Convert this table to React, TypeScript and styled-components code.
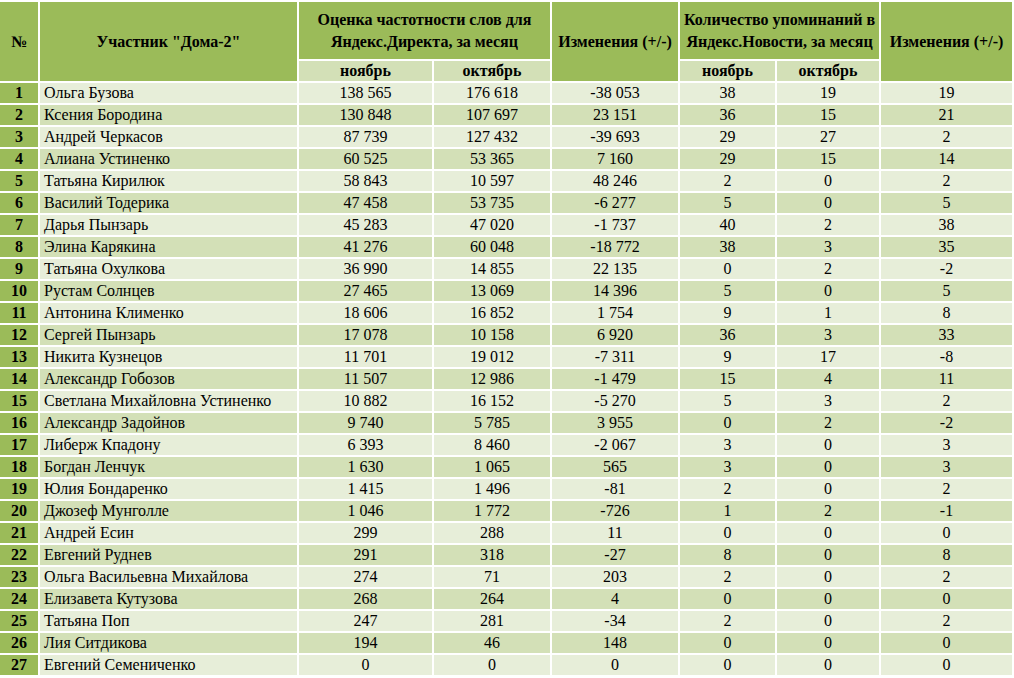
import React from "react";
import styled, { createGlobalStyle } from "styled-components";

const Global = createGlobalStyle`
  html, body { margin: 0; padding: 0; background: #ffffff; }
  body { font-family: "Liberation Serif", "DejaVu Serif", serif; color: #000; }
`;

const HEAD = "#9bbb59";
const SUB = "#d3e0b7";
const ODD = "#e7eed9";
const EVEN = "#d3e0b7";

const Grid = styled.div`
  display: grid;
  grid-template-columns: 38px 257px 133px 116px 126px 95px 102px 131px;
  grid-template-rows: 57px 20px;
  grid-auto-rows: 20px;
  gap: 2px;
  padding: 2px 2px 0 0;
  width: 1014px;
  height: 678px;
  box-sizing: border-box;
  background: #ffffff;
  font-family: "Liberation Serif", "DejaVu Serif", serif;
  color: #000;
`;

const HeadCell = styled.div<{ $col: string; $row: string }>`
  grid-column: ${(p) => p.$col};
  grid-row: ${(p) => p.$row};
  background: ${HEAD};
  display: flex;
  align-items: center;
  justify-content: center;
  text-align: center;
  font-weight: bold;
  font-size: 16px;
  line-height: 22px;
  padding: 0 1px;
  white-space: nowrap;
`;

const SubCell = styled.div<{ $col: number }>`
  grid-column: ${(p) => p.$col};
  grid-row: 2;
  background: ${SUB};
  display: flex;
  align-items: center;
  justify-content: center;
  font-weight: bold;
  font-size: 16px;
`;

const NumCell = styled.div`
  background: ${HEAD};
  display: flex;
  align-items: center;
  justify-content: center;
  font-weight: bold;
  font-size: 16px;
`;

const DataCell = styled.div<{ $alt: boolean; $left?: boolean }>`
  background: ${(p) => (p.$alt ? EVEN : ODD)};
  display: flex;
  align-items: center;
  justify-content: ${(p) => (p.$left ? "flex-start" : "center")};
  padding-left: ${(p) => (p.$left ? "4px" : "0")};
  font-size: 16px;
  white-space: nowrap;
`;

type Row = [string, string, string, string, string, string, string];

const rows: Row[] = [
  ["Ольга Бузова", "138 565", "176 618", "-38 053", "38", "19", "19"],
  ["Ксения Бородина", "130 848", "107 697", "23 151", "36", "15", "21"],
  ["Андрей Черкасов", "87 739", "127 432", "-39 693", "29", "27", "2"],
  ["Алиана Устиненко", "60 525", "53 365", "7 160", "29", "15", "14"],
  ["Татьяна Кирилюк", "58 843", "10 597", "48 246", "2", "0", "2"],
  ["Василий Тодерика", "47 458", "53 735", "-6 277", "5", "0", "5"],
  ["Дарья Пынзарь", "45 283", "47 020", "-1 737", "40", "2", "38"],
  ["Элина Карякина", "41 276", "60 048", "-18 772", "38", "3", "35"],
  ["Татьяна Охулкова", "36 990", "14 855", "22 135", "0", "2", "-2"],
  ["Рустам Солнцев", "27 465", "13 069", "14 396", "5", "0", "5"],
  ["Антонина Клименко", "18 606", "16 852", "1 754", "9", "1", "8"],
  ["Сергей Пынзарь", "17 078", "10 158", "6 920", "36", "3", "33"],
  ["Никита Кузнецов", "11 701", "19 012", "-7 311", "9", "17", "-8"],
  ["Александр Гобозов", "11 507", "12 986", "-1 479", "15", "4", "11"],
  ["Светлана Михайловна Устиненко", "10 882", "16 152", "-5 270", "5", "3", "2"],
  ["Александр Задойнов", "9 740", "5 785", "3 955", "0", "2", "-2"],
  ["Либерж Кпадону", "6 393", "8 460", "-2 067", "3", "0", "3"],
  ["Богдан Ленчук", "1 630", "1 065", "565", "3", "0", "3"],
  ["Юлия Бондаренко", "1 415", "1 496", "-81", "2", "0", "2"],
  ["Джозеф Мунголле", "1 046", "1 772", "-726", "1", "2", "-1"],
  ["Андрей Есин", "299", "288", "11", "0", "0", "0"],
  ["Евгений Руднев", "291", "318", "-27", "8", "0", "8"],
  ["Ольга Васильевна Михайлова", "274", "71", "203", "2", "0", "2"],
  ["Елизавета Кутузова", "268", "264", "4", "0", "0", "0"],
  ["Татьяна Поп", "247", "281", "-34", "2", "0", "2"],
  ["Лия Ситдикова", "194", "46", "148", "0", "0", "0"],
  ["Евгений Семениченко", "0", "0", "0", "0", "0", "0"],
];

export default function App() {
  return (
    <>
      <Global />
      <Grid>
        <HeadCell $col="1" $row="1 / span 2">№</HeadCell>
        <HeadCell $col="2" $row="1 / span 2">Участник "Дома-2"</HeadCell>
        <HeadCell $col="3 / span 2" $row="1">
          Оценка частотности слов для
          <br />
          Яндекс.Директа, за месяц
        </HeadCell>
        <HeadCell $col="5" $row="1 / span 2">Изменения (+/-)</HeadCell>
        <HeadCell $col="6 / span 2" $row="1">
          Количество упоминаний в
          <br />
          Яндекс.Новости, за месяц
        </HeadCell>
        <HeadCell $col="8" $row="1 / span 2">Изменения (+/-)</HeadCell>
        <SubCell $col={3}>ноябрь</SubCell>
        <SubCell $col={4}>октябрь</SubCell>
        <SubCell $col={6}>ноябрь</SubCell>
        <SubCell $col={7}>октябрь</SubCell>
        {rows.map((r, i) => {
          const alt = i % 2 === 1;
          return (
            <React.Fragment key={i}>
              <NumCell>{i + 1}</NumCell>
              <DataCell $alt={alt} $left>
                {r[0]}
              </DataCell>
              {r.slice(1).map((v, j) => (
                <DataCell key={j} $alt={alt}>
                  {v}
                </DataCell>
              ))}
            </React.Fragment>
          );
        })}
      </Grid>
    </>
  );
}
